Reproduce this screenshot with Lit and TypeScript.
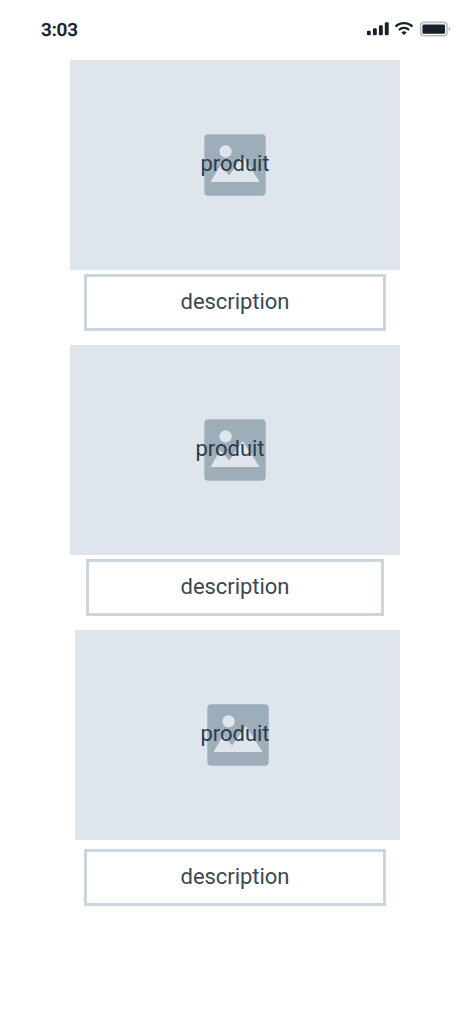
import { LitElement, html, css } from "lit";
import { customElement, property } from "lit/decorators.js";
import { classMap } from "lit/directives/class-map.js";

@customElement("status-bar")
class StatusBar extends LitElement {
  static styles = css`
    :host {
      display: flex;
      justify-content: space-between;
      height: 60px;
      box-sizing: border-box;
      padding: 18px 18px 0 41px;
      color: #17222c;
    }
    .time {
      font: 500 19px/24px Roboto, sans-serif;
      letter-spacing: -0.1px;
      -webkit-text-stroke: 0.3px #17222c;
    }
    .icons {
      display: block;
      width: 86px;
      height: 24px;
    }
  `;
  render() {
    return html`
      <span class="time">3:03</span>
      <svg class="icons" viewBox="366 18 86 24">
        <g fill="#17222c">
          <rect x="366.9" y="30.7" width="3.9" height="4.6" rx="1.2" />
          <rect x="372.9" y="28.2" width="3.9" height="7.1" rx="1.2" />
          <rect x="378.9" y="25.2" width="3.9" height="10.1" rx="1.2" />
          <rect x="384.8" y="22.2" width="3.9" height="13.1" rx="1.2" />
          <path d="M404 35L401.4 32.4A3.8 3.8 0 0 1 406.6 32.4Z" />
          <rect x="422.4" y="24.4" width="22.6" height="9.4" rx="1.4" />
        </g>
        <g fill="none" stroke="#17222c" stroke-width="2.2">
          <path d="M395.6 26.6A12 12 0 0 1 412.4 26.6" />
          <path d="M398.9 30A7.3 7.3 0 0 1 409.1 30" />
        </g>
        <rect x="420.6" y="22.4" width="26.4" height="13.3" rx="3.2" fill="none" stroke="#bdbdbe" stroke-width="1.6" />
        <path d="M448.6 26.9Q450.4 27.5 450.4 29T448.6 31.2Z" fill="#b9b9ba" />
      </svg>
    `;
  }
}

@customElement("product-card")
class ProductCard extends LitElement {
  @property() name = "";
  @property() description = "";
  @property() variant = "";

  static styles = css`
    :host {
      display: block;
      font: 400 22px/26px Roboto, sans-serif;
    }
    .picture {
      position: relative;
      display: flex;
      align-items: center;
      justify-content: center;
      height: 210px;
      box-sizing: border-box;
      margin: 0 70px;
      background: #dfe5ed;
    }
    .last .picture {
      margin-left: 75px;
    }
    .placeholder {
      width: 62px;
      height: 62px;
    }
    .name {
      position: absolute;
      top: 91px;
      left: 0;
      width: 330px;
      text-align: center;
      color: #2b3c4b;
      letter-spacing: -0.02px;
    }
    .shifted .name,
    .last .name {
      left: -5px;
    }
    .description {
      display: flex;
      align-items: center;
      justify-content: center;
      height: 57px;
      box-sizing: border-box;
      margin: 4px 84px 0;
      padding-bottom: 1px;
      border: 3px solid #cad5df;
      color: #394956;
      letter-spacing: -0.05px;
    }
    .shifted .description {
      margin: 4px 86px 0;
    }
    .last .description {
      margin-top: 9px;
    }
  `;
  render() {
    return html`
      <div class=${classMap({ shifted: this.variant === "shifted", last: this.variant === "last" })}>
        <div class="picture">
          <svg class="placeholder" viewBox="0 0 62 62">
            <rect x=".3" y=".3" width="61.4" height="61.4" rx="4" fill="#9eadba" />
            <circle cx="21.6" cy="17.4" r="6.1" fill="#dfe5ed" />
            <path d="M6.4 48L16.3 31.4L25.2 41.5L38.8 22L55.6 48Z" fill="#dfe5ed" />
          </svg>
          <span class="name">${this.name}</span>
        </div>
        <div class="description">${this.description}</div>
      </div>
    `;
  }
}

@customElement("app-root")
class AppRoot extends LitElement {
  static styles = css`
    :host {
      display: block;
      min-height: 1015px;
      background: #fff;
    }
    .products {
      display: flex;
      flex-direction: column;
      gap: 14px;
    }
  `;
  render() {
    return html`
      <status-bar></status-bar>
      <main class="products">
        ${["", "shifted", "last"].map(
          (variant) => html`<product-card name="produit" description="description" variant=${variant}></product-card>`
        )}
      </main>
    `;
  }
}
